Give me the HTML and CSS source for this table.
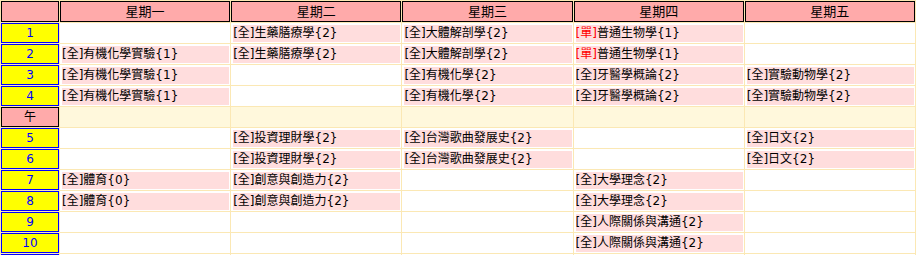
FILE: index.html
```html
<!DOCTYPE html>
<html lang="zh-Hant">
<head>
<meta charset="utf-8">
<title>課表</title>
<link rel="stylesheet" href="styles.css">
</head>
<body>
<table class="tt">
  <colgroup><col class="c0"><col><col><col><col><col></colgroup>
  <tr class="hd"><th></th><th>星期一</th><th>星期二</th><th>星期三</th><th>星期四</th><th>星期五</th></tr>
  <tr><td class="n">1</td><td class="c"><div class="e"></div></td><td class="c"><div class="k">[全]生藥膳療學{2}</div></td><td class="c"><div class="k">[全]大體解剖學{2}</div></td><td class="c"><div class="k"><span class="r">[單]</span>普通生物學{1}</div></td><td class="c"><div class="e"></div></td></tr>
  <tr><td class="n">2</td><td class="c"><div class="k">[全]有機化學實驗{1}</div></td><td class="c"><div class="k">[全]生藥膳療學{2}</div></td><td class="c"><div class="k">[全]大體解剖學{2}</div></td><td class="c"><div class="k"><span class="r">[單]</span>普通生物學{1}</div></td><td class="c"><div class="e"></div></td></tr>
  <tr><td class="n">3</td><td class="c"><div class="k">[全]有機化學實驗{1}</div></td><td class="c"><div class="e"></div></td><td class="c"><div class="k">[全]有機化學{2}</div></td><td class="c"><div class="k">[全]牙醫學概論{2}</div></td><td class="c"><div class="k">[全]實驗動物學{2}</div></td></tr>
  <tr><td class="n">4</td><td class="c"><div class="k">[全]有機化學實驗{1}</div></td><td class="c"><div class="e"></div></td><td class="c"><div class="k">[全]有機化學{2}</div></td><td class="c"><div class="k">[全]牙醫學概論{2}</div></td><td class="c"><div class="k">[全]實驗動物學{2}</div></td></tr>
  <tr class="noon"><td class="m">午</td><td class="w"></td><td class="w"></td><td class="w"></td><td class="w"></td><td class="w"></td></tr>
  <tr><td class="n">5</td><td class="c"><div class="e"></div></td><td class="c"><div class="k">[全]投資理財學{2}</div></td><td class="c"><div class="k">[全]台灣歌曲發展史{2}</div></td><td class="c"><div class="e"></div></td><td class="c"><div class="k">[全]日文{2}</div></td></tr>
  <tr><td class="n">6</td><td class="c"><div class="e"></div></td><td class="c"><div class="k">[全]投資理財學{2}</div></td><td class="c"><div class="k">[全]台灣歌曲發展史{2}</div></td><td class="c"><div class="e"></div></td><td class="c"><div class="k">[全]日文{2}</div></td></tr>
  <tr><td class="n">7</td><td class="c"><div class="k">[全]體育{0}</div></td><td class="c"><div class="k">[全]創意與創造力{2}</div></td><td class="c"><div class="e"></div></td><td class="c"><div class="k">[全]大學理念{2}</div></td><td class="c"><div class="e"></div></td></tr>
  <tr><td class="n">8</td><td class="c"><div class="k">[全]體育{0}</div></td><td class="c"><div class="k">[全]創意與創造力{2}</div></td><td class="c"><div class="e"></div></td><td class="c"><div class="k">[全]大學理念{2}</div></td><td class="c"><div class="e"></div></td></tr>
  <tr><td class="n">9</td><td class="c"><div class="e"></div></td><td class="c"><div class="e"></div></td><td class="c"><div class="e"></div></td><td class="c"><div class="k">[全]人際關係與溝通{2}</div></td><td class="c"><div class="e"></div></td></tr>
  <tr><td class="n">10</td><td class="c"><div class="e"></div></td><td class="c"><div class="e"></div></td><td class="c"><div class="e"></div></td><td class="c"><div class="k">[全]人際關係與溝通{2}</div></td><td class="c"><div class="e"></div></td></tr>
  <tr><td class="n"></td><td class="c"><div class="e"></div></td><td class="c"><div class="e"></div></td><td class="c"><div class="e"></div></td><td class="c"><div class="e"></div></td><td class="c"><div class="e"></div></td></tr>
</table>
</body>
</html>
```
FILE: styles.css
```css
html, body {
  margin: 0;
  padding: 0;
  background: #ffffff;
}
body {
  font-family: "DejaVu Sans", "Noto Sans CJK TC", sans-serif;
  font-size: 12px;
  color: #000;
}
.tt {
  width: 916px;
  table-layout: fixed;
  border-collapse: separate;
  border-spacing: 1px;
  background: #fbe8b4;
}
.c0 { width: 58px; }
.tt th, .tt td {
  padding: 0;
  box-sizing: border-box;
}
.hd th {
  height: 21px;
  border: 1px solid #000;
  background: #ffaaaa;
  font-weight: normal;
  font-size: 13px;
  text-align: center;
  line-height: 19px;
}
.n {
  height: 20px;
  border: 1px solid #0000ff;
  background: #ffff00;
  color: #0000ff;
  text-align: center;
  font-size: 12px;
  line-height: 18px;
}
.m {
  height: 20px;
  border: 1px solid #000;
  background: #ffaaaa;
  text-align: center;
  line-height: 18px;
}
.w {
  background: #fff8dc;
}
.c {
  height: 20px;
  background: #ffffff;
  padding: 2px 1px 1px 2px !important;
  vertical-align: top;
}
.k, .e {
  height: 17px;
  line-height: 17px;
  white-space: nowrap;
  overflow: hidden;
}
.k {
  background: #ffdddd;
}
.r {
  color: #ff0000;
}
```
